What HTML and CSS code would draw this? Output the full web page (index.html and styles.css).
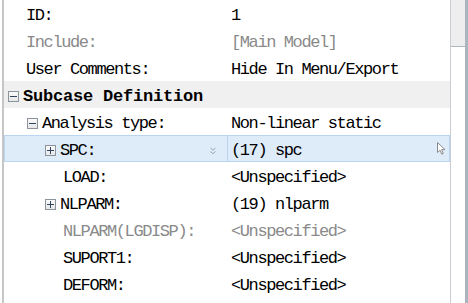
FILE: index.html
```html
<!DOCTYPE html>
<html lang="en">
  <head>
    <meta charset="UTF-8" />
    <meta name="viewport" content="width=device-width, initial-scale=1.0" />
    <title>Subcase Properties</title>
    <link rel="stylesheet" href="styles.css">
  </head>

  <body>
    <div class="frame">
      <div class="panel">
        <div class="row">
          <div class="name leaf0">ID:</div>
          <div class="value">1</div>
        </div>
        <div class="row muted">
          <div class="name leaf0">Include:</div>
          <div class="value">[Main Model]</div>
        </div>
        <div class="row">
          <div class="name leaf0">User Comments:</div>
          <div class="value">Hide In Menu/Export</div>
        </div>
        <div class="row section">
          <div class="name lvl0"><span class="toggle"></span>Subcase Definition</div>
        </div>
        <div class="row">
          <div class="name lvl1"><span class="toggle"></span>Analysis type:</div>
          <div class="value">Non-linear static</div>
        </div>
        <div class="row selected">
          <div class="name lvl2">
            <span class="toggle plus"></span>SPC:
            <svg class="chevron" width="6" height="8" viewBox="0 0 6 8">
              <path d="M0.5 1 L3 3.2 L5.5 1 M0.5 4.5 L3 6.7 L5.5 4.5" fill="none" stroke="#9aa0a8" stroke-width="1"/>
            </svg>
          </div>
          <div class="value">
            (17) spc
            <svg class="cursor" width="9" height="13" viewBox="0 0 9 13">
              <path d="M0.5 0.5 L0.5 10.5 L3 8.2 L4.8 12.2 L6.3 11.5 L4.6 7.6 L8 7.6 Z" fill="#fff" stroke="#8c8c8c" stroke-width="1"/>
            </svg>
          </div>
        </div>
        <div class="row">
          <div class="name lvl2 nobox">LOAD:</div>
          <div class="value">&lt;Unspecified&gt;</div>
        </div>
        <div class="row">
          <div class="name lvl2"><span class="toggle plus"></span>NLPARM:</div>
          <div class="value">(19) nlparm</div>
        </div>
        <div class="row muted">
          <div class="name lvl2 nobox">NLPARM(LGDISP):</div>
          <div class="value">&lt;Unspecified&gt;</div>
        </div>
        <div class="row">
          <div class="name lvl2 nobox">SUPORT1:</div>
          <div class="value">&lt;Unspecified&gt;</div>
        </div>
        <div class="row">
          <div class="name lvl2 nobox">DEFORM:</div>
          <div class="value">&lt;Unspecified&gt;</div>
        </div>
      </div>
      <div class="scrollbar">
        <div class="thumb"></div>
      </div>
      <div class="edge"></div>
    </div>
  </body>
</html>
```

FILE: styles.css
```css
body {
  margin: 0;
  background-color: #fff;
  font-family: "Liberation Mono", "Noto Sans CJK SC", monospace;
  font-size: 17px;
  letter-spacing: -1.4px;
  color: #000;
}

.frame {
  display: flex;
  width: 468px;
  height: 303px;
  overflow: hidden;
}

.panel {
  margin-left: 2px;
  width: 446px;
  border-left: 2px solid #c6c6c6;
  border-right: 1px solid #c9ced4;
}

.row {
  display: flex;
  box-sizing: border-box;
  height: 27px;
  padding-top: 4px;
  line-height: 23px;
  white-space: nowrap;
}

.name {
  display: flex;
  align-items: center;
  width: 223px;
  flex-shrink: 0;
  box-sizing: border-box;
}

.value {
  display: flex;
  align-items: center;
  flex: 1;
  padding-left: 3px;
  border-left: 1px solid transparent;
}

.leaf0 {
  padding-left: 22px;
}

.lvl0 {
  padding-left: 4px;
}

.lvl1 {
  padding-left: 23px;
}

.lvl2 {
  padding-left: 41px;
}

.lvl2.nobox {
  padding-left: 59px;
}

.muted {
  color: #8a8a8a;
}

.section {
  background-color: #f0f0f0;
  font-weight: bold;
  letter-spacing: -0.2px;
}

.section .name {
  width: auto;
}

.selected {
  background-color: #deebf8;
  box-shadow: inset 0 0 0 1px #b9d5f2;
  padding-top: 0;
}

.selected .name,
.selected .value {
  padding-top: 4px;
}

.selected .value {
  border-left-color: #b9d5f2;
}

.toggle {
  position: relative;
  display: inline-block;
  width: 11px;
  height: 11px;
  margin-right: 4px;
  box-sizing: border-box;
  border: 1px solid #8d939b;
  background: linear-gradient(#fbfbfb, #e6e7e9);
}

.toggle::before {
  content: "";
  position: absolute;
  left: 1px;
  top: 4px;
  width: 7px;
  height: 1px;
  background-color: #33445e;
}

.toggle.plus::after {
  content: "";
  position: absolute;
  left: 4px;
  top: 1px;
  width: 1px;
  height: 7px;
  background-color: #33445e;
}

.chevron {
  margin-left: auto;
  margin-right: 11px;
}

.cursor {
  margin-left: auto;
  margin-right: 4px;
  margin-top: -4px;
}

.scrollbar {
  width: 14px;
  height: 100%;
  background-color: #fff;
}

.thumb {
  height: 46px;
  background-color: #eeeeee;
  border-bottom: 1px solid #b0b6bd;
}

.edge {
  width: 3px;
  height: 100%;
  background-color: #abb5c0;
}
```
